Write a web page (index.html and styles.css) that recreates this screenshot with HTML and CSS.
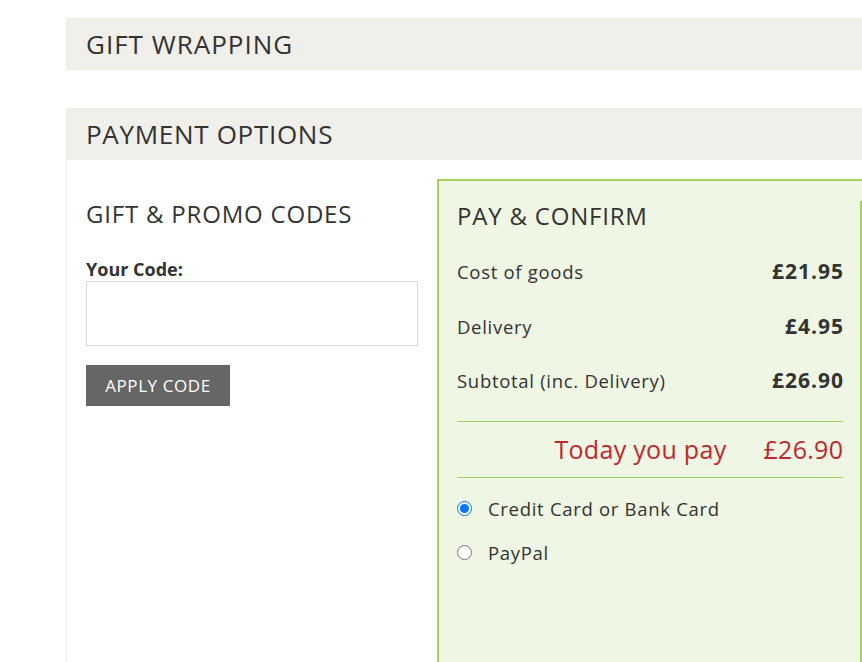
FILE: index.html
```html
<!DOCTYPE html>
<html lang="en">
<head>
<meta charset="utf-8">
<title>Checkout</title>
<link rel="stylesheet" href="styles.css">
</head>
<body>
<div class="page">
  <section class="section gift">
    <h2 class="bar">GIFT WRAPPING</h2>
  </section>
  <section class="section payment">
    <h2 class="bar">PAYMENT OPTIONS</h2>
    <div class="payment-body">
      <div class="promo">
        <h3 class="col-title">GIFT &amp; PROMO CODES</h3>
        <label class="code-label" for="code">Your Code:</label>
        <input class="code-input" id="code" type="text">
        <button class="apply-btn" type="button">APPLY CODE</button>
      </div>
      <div class="confirm">
        <div class="confirm-inner">
          <h3 class="col-title">PAY &amp; CONFIRM</h3>
          <div class="row"><span class="row-label">Cost of goods</span><span class="row-value">£21.95</span></div>
          <div class="row"><span class="row-label">Delivery</span><span class="row-value">£4.95</span></div>
          <div class="row"><span class="row-label">Subtotal (inc. Delivery)</span><span class="row-value">£26.90</span></div>
          <div class="total"><span>Today you pay</span><span class="total-value">£26.90</span></div>
          <label class="method"><input type="radio" name="method" checked><span>Credit Card or Bank Card</span></label>
          <label class="method"><input type="radio" name="method"><span>PayPal</span></label>
        </div>
      </div>
    </div>
  </section>
</div>
</body>
</html>
```
FILE: styles.css
```css
html, body {
  margin: 0;
  padding: 0;
  background: #ffffff;
  overflow: hidden;
}
body {
  font-family: "Open Sans", "Lato", sans-serif;
  color: #333333;
}
.page {
  margin-left: 66px;
  padding-top: 18px;
  width: 796px;
}
.bar {
  margin: 0;
  height: 52px;
  display: flex;
  align-items: center;
  padding-left: 20px;
  background: #f0efea;
  font-size: 26px;
  letter-spacing: 0.7px;
  font-weight: 400;
  color: #333333;
}
.gift .bar {
  letter-spacing: 1px;
}
.gift {
  margin-bottom: 38px;
}
.payment-body {
  display: flex;
  border-left: 1px solid #efeee6;
  padding-left: 19px;
  padding-top: 19px;
  gap: 19px;
}
.promo {
  width: 332px;
  flex: none;
}
.col-title {
  margin: 0;
  font-size: 24px;
  letter-spacing: 0.8px;
  font-weight: 400;
  line-height: 30px;
  color: #333333;
}
.promo .col-title {
  margin-top: 20px;
  margin-bottom: 29px;
}
.code-label {
  display: block;
  font-size: 18px;
  font-weight: 700;
  line-height: 22px;
  margin-bottom: 1px;
}
.code-input {
  display: block;
  box-sizing: border-box;
  width: 332px;
  height: 65px;
  margin: 0 0 19px 0;
  border: 1px solid #d9d9d9;
  background: #fff;
  font: inherit;
}
.apply-btn {
  display: block;
  width: 144px;
  height: 41px;
  border: none;
  background: #666666;
  color: #ffffff;
  font-family: inherit;
  font-size: 17px;
  letter-spacing: 0.6px;
  padding: 0;
}
.confirm {
  width: 425px;
  flex: none;
  box-sizing: border-box;
  min-height: 520px;
  background: #eff6e3;
  border-top: 2px solid #a8d05c;
  border-left: 2px solid #a8d05c;
  padding-top: 17px;
}
.confirm-inner {
  border-right: 2px solid #a8d05c;
  padding: 0 17px 200px 18px;
}
.confirm .col-title {
  margin-top: 3px;
  margin-bottom: 28px;
}
.row {
  display: flex;
  justify-content: space-between;
  align-items: baseline;
  height: 54.5px;
  line-height: 24px;
}
.row-label {
  font-size: 18.5px;
  letter-spacing: 0.7px;
}
.row-value {
  font-size: 21px;
  font-weight: 700;
  letter-spacing: 1px;
  margin-right: -1px;
}
.total {
  display: flex;
  justify-content: flex-end;
  gap: 37px;
  align-items: center;
  border-top: 1px solid #a8d05c;
  border-bottom: 1px solid #a8d05c;
  height: 55px;
  margin-top: -2px;
  color: #c1272d;
  font-size: 25px;
  letter-spacing: 0.3px;
}
.total-value {
  margin-right: -0.3px;
}
.method {
  display: flex;
  align-items: center;
  font-size: 18.5px;
  letter-spacing: 0.7px;
  height: 44px;
}
.method:first-of-type {
  margin-top: 9px;
}
.method input {
  margin: 0 16px 0 0;
  width: 15px;
  height: 15px;
}
```
